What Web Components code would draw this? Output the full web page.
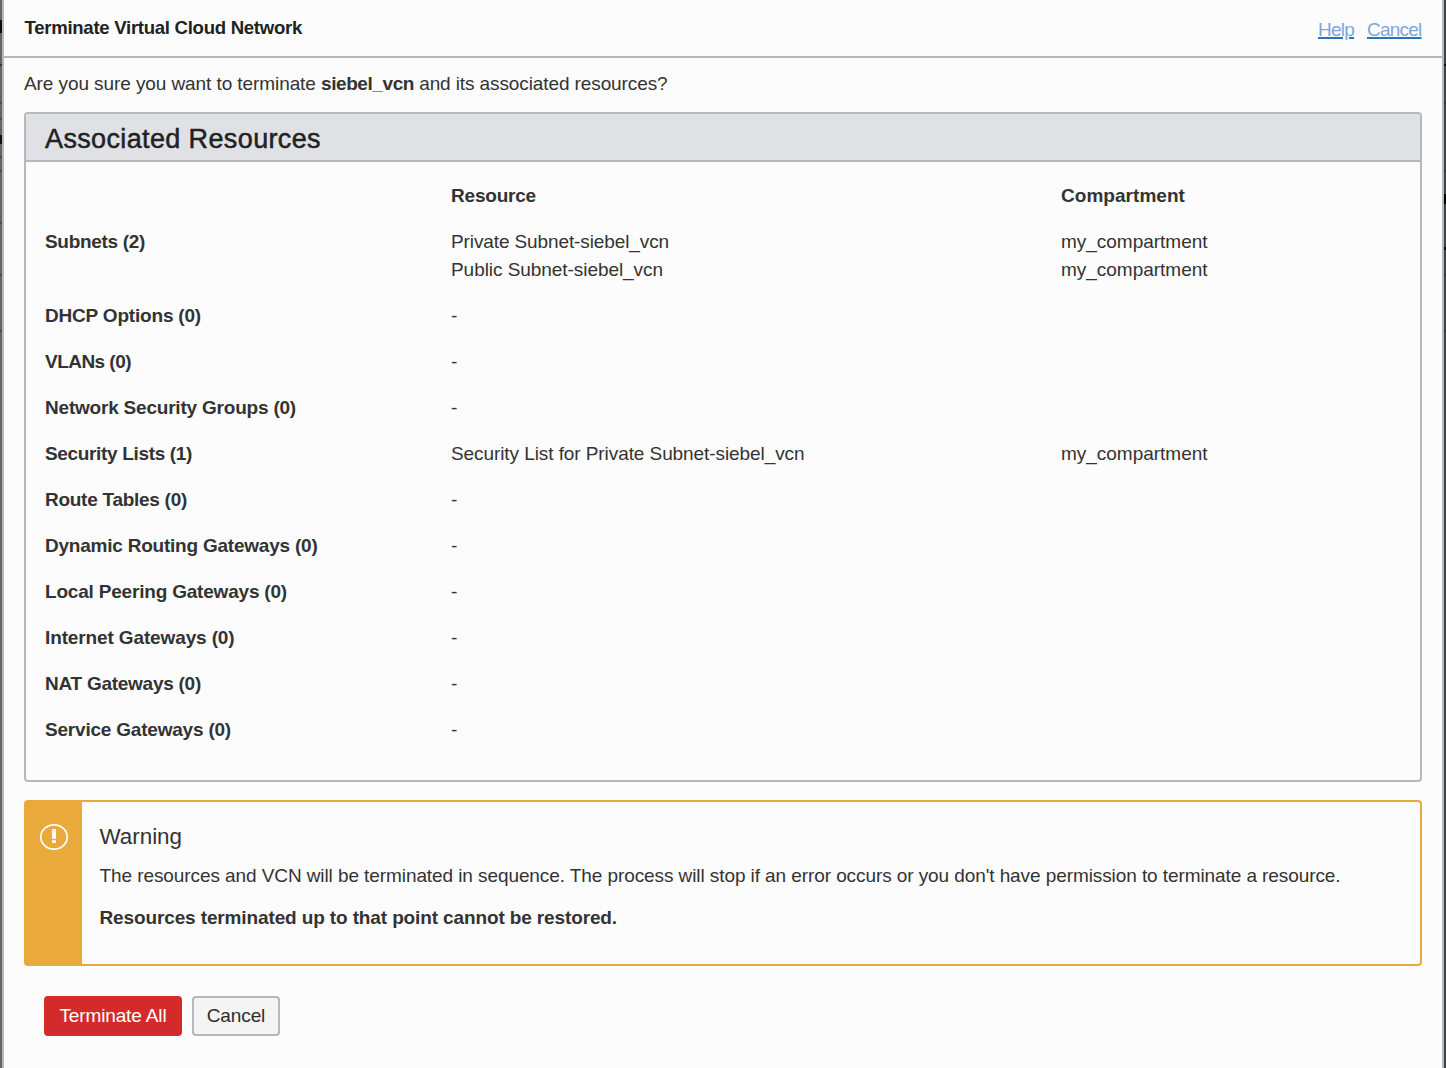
<!DOCTYPE html>
<html lang="en">
<head>
<meta charset="utf-8">
<title>Terminate Virtual Cloud Network</title>
<style>
html,body{margin:0;height:100%;overflow:hidden}
body{font-family:"Liberation Sans",Arial,sans-serif;font-size:19px;line-height:28px;color:#333;background:
linear-gradient(#0c0c0c,#0c0c0c) 0 20px/2px 13px no-repeat,
linear-gradient(#333,#333) 0 64px/2px 2px no-repeat,
linear-gradient(#4c4c4c,#4c4c4c) 0 102px/2px 2px no-repeat,
linear-gradient(#4c4c4c,#4c4c4c) 0 118px/2px 2px no-repeat,
linear-gradient(#111,#111) 0 135px/2px 9px no-repeat,
linear-gradient(#4c4c4c,#4c4c4c) 0 156px/2px 2px no-repeat,
linear-gradient(#4c4c4c,#4c4c4c) 0 170px/2px 2px no-repeat,
linear-gradient(#4c4c4c,#4c4c4c) 0 222px/2px 2px no-repeat,
linear-gradient(#4c4c4c,#4c4c4c) 0 274px/2px 2px no-repeat,
linear-gradient(#4c4c4c,#4c4c4c) 0 330px/2px 2px no-repeat,
linear-gradient(#0c0c0c,#0c0c0c) 100% 64px/2px 2px no-repeat,
linear-gradient(#333,#333) 100% 102px/2px 2px no-repeat,
linear-gradient(#333,#333) 100% 170px/2px 2px no-repeat,
linear-gradient(#000,#000) 100% 194px/2px 10px no-repeat,
linear-gradient(#0c0c0c,#0c0c0c) 100% 247px/2px 3px no-repeat,
linear-gradient(#333,#333) 100% 274px/2px 2px no-repeat,
linear-gradient(#333,#333) 100% 330px/2px 2px no-repeat,
linear-gradient(90deg,#636363 50%,#414445 50%)}
</style>
</head>
<body>
<terminate-dialog></terminate-dialog>
<script>
function define(name, html, setup) {
  const tpl = document.createElement('template');
  tpl.innerHTML = html;
  customElements.define(name, class extends HTMLElement {
    constructor() {
      super();
      this.attachShadow({mode: 'open'}).appendChild(tpl.content.cloneNode(true));
    }
    connectedCallback() { if (setup) setup(this, this.shadowRoot); }
  });
}

// A single line of text, tracked to the advance width given in "w".
define('track-text', `<style>:host{display:inline-block;white-space:nowrap}:host([link]){text-decoration:underline;text-decoration-color:#2672c8;text-decoration-thickness:2px;text-underline-offset:1px}</style><slot></slot>`, host => {
  const width = parseFloat(host.getAttribute('w'));
  const n = host.textContent.length;
  if (width && n) {
    const natural = host.getBoundingClientRect().width;
    host.style.letterSpacing = ((width - natural) / n).toFixed(4) + 'px';
  }
});

define('dialog-header', `<style>
:host{display:flex;justify-content:space-between;box-sizing:border-box;height:58px;padding:0 20.5px 0 20.5px;border-bottom:2px solid #b4b9be;color:#222}
.title{padding-top:14px;font-size:18.6px;font-weight:bold}
nav{display:flex;gap:13px;padding-top:16px}
a{color:#7ba7df}
</style><div class="title"><slot></slot></div>
<nav><a><track-text link w="36">Help</track-text></a><a><track-text link w="54.5">Cancel</track-text></a></nav>`);

define('resource-panel', `<style>
:host{display:block;box-sizing:border-box;height:670px;border:2px solid #b4b9be;border-radius:4px;overflow:hidden}
header{height:46px;line-height:50px;padding-left:19px;border-bottom:2px solid #b4b9be;background:#e0e1e5;color:#222;font-size:27px;-webkit-text-stroke:.5px #222}
.rows{display:flex;flex-direction:column;gap:18px;padding:20px 19px 36px}
</style><header><slot name="title"></slot></header><div class="rows"><slot></slot></div>`);

define('resource-row', `<style>
:host{display:grid;grid-template-columns:406px 610px 1fr}
:host([head]){font-weight:bold}
.label{font-weight:bold}
.cell{display:flex;flex-direction:column;align-items:flex-start}
</style><div class="label"><slot name="label"></slot></div><div class="cell"><slot></slot></div><div class="cell"><slot name="compartment"></slot></div>`);

define('warning-box', `<style>
:host{display:flex;box-sizing:border-box;height:166px;border:2px solid #eaa93b;border-radius:4px}
.side{width:56px;background:#eaa93b}
svg{display:block;margin:21px 0 0 13px}
.text{padding:20px 0 0 17.5px;display:flex;flex-direction:column}
.title{font-size:22.4px;height:40px;line-height:30px}
.last{font-weight:bold;margin-top:14px}
</style><div class="side"><svg width="30" height="28" viewBox="0 0 30 28"><ellipse cx="15" cy="14" rx="13.2" ry="12.2" fill="none" stroke="#fff" stroke-width="1.7"/><path d="M13 6h4v9.7h-4zM13 17.3h4v2.8h-4z" fill="#fff"/></svg></div>
<div class="text"><div class="title"><slot name="title"></slot></div><div><slot></slot></div><div class="last"><slot name="strong"></slot></div></div>`);

define('action-button', `<style>
:host{display:block}
button{display:block;box-sizing:border-box;height:40px;width:88px;padding:0;border:2px solid #b4b9c0;border-radius:4px;background:#f4f4f5;color:#2d2d2d;font:inherit;line-height:36px}
:host([danger]) button{width:138px;border-color:#d32b2b;background:#d32b2b;color:#fff}
</style><button><slot></slot></button>`);

const rest = [['Security Lists (1)',147,'list'],['Route Tables (0)',142],['Dynamic Routing Gateways (0)',272.5],['Local Peering Gateways (0)',242],['Internet Gateways (0)',189.5],['NAT Gateways (0)',156],['Service Gateways (0)',186]];
const rows = [['DHCP Options (0)',156],['VLANs (0)',86],['Network Security Groups (0)',251], ...rest].map(([t,w,list]) =>
 `<resource-row><track-text slot="label" w="${w}">${t}</track-text>${list
  ? '<track-text w="353.5">Security List for Private Subnet-siebel_vcn</track-text><track-text slot="compartment" w="146.5">my_compartment</track-text>'
  : '<track-text w="8">-</track-text>'}</resource-row>`).join('');

define('terminate-dialog', `<style>
:host{display:block;box-sizing:border-box;height:1068px;margin:0 2px;border:solid #b4b9be;border-width:0 2px;background:#fcfcfc}
.body{padding:0 20px}
.question{height:42px;padding-top:12px}
warning-box{margin-top:18px}
.actions{display:flex;gap:10px;padding:30px 20px 0}
</style>
<dialog-header><track-text w="277.5">Terminate Virtual Cloud Network</track-text></dialog-header>
<div class="body">
<div class="question"><track-text w="297">Are you sure you want to terminate&nbsp;</track-text><b><track-text w="93">siebel_vcn</track-text></b><track-text w="253.5">&nbsp;and its associated resources?</track-text></div>
<resource-panel><track-text slot="title" w="276">Associated Resources</track-text>
<resource-row head><track-text w="85">Resource</track-text><track-text slot="compartment" w="124">Compartment</track-text></resource-row>
<resource-row><track-text slot="label" w="100">Subnets (2)</track-text><track-text w="218">Private Subnet-siebel_vcn</track-text><track-text w="212">Public Subnet-siebel_vcn</track-text><track-text slot="compartment" w="146.5">my_compartment</track-text><track-text slot="compartment" w="146.5">my_compartment</track-text></resource-row>
${rows}</resource-panel>
<warning-box><track-text slot="title" w="82.5">Warning</track-text><track-text w="1241">The resources and VCN will be terminated in sequence. The process will stop if an error occurs or you don't have permission to terminate a resource.</track-text><track-text slot="strong" w="517.5">Resources terminated up to that point cannot be restored.</track-text></warning-box>
<div class="actions"><action-button danger><track-text w="107">Terminate All</track-text></action-button><action-button><track-text w="58.5">Cancel</track-text></action-button></div>
</div>`);
</script>
</body>
</html>
